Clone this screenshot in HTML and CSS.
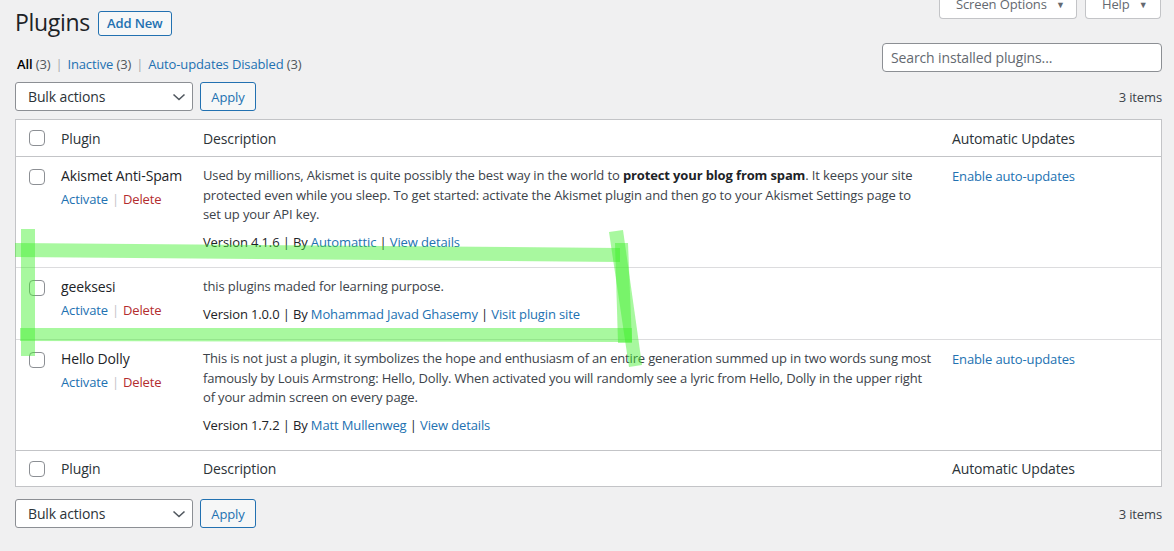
FILE: index.html
```html
<!DOCTYPE html>
<html lang="en">
<head>
<meta charset="utf-8">
<title>Plugins</title>
<link rel="stylesheet" href="styles.css">
</head>
<body>
<div class="wrap">
  <div class="head-row">
    <div class="title-group">
      <h1 class="page-title">Plugins</h1>
      <a class="btn-add" href="#">Add New</a>
    </div>
    <div class="meta-tabs">
      <button class="meta-tab tab-screen">Screen Options <span class="tri">&#9660;</span></button>
      <button class="meta-tab tab-help">Help <span class="tri">&#9660;</span></button>
    </div>
  </div>

  <div class="filter-row">
    <ul class="subsubsub">
      <li><a class="current" href="#">All <span class="count">(3)</span></a></li>
      <li class="sep">|</li>
      <li><a href="#">Inactive <span class="count">(3)</span></a></li>
      <li class="sep">|</li>
      <li><a href="#">Auto-updates Disabled <span class="count">(3)</span></a></li>
    </ul>
    <div class="search-box">Search installed plugins...</div>
  </div>

  <div class="tablenav">
    <div class="actions">
      <div class="select">Bulk actions
        <svg class="chev" width="14" height="8" viewBox="0 0 14 8"><path d="M1.5 1.5 L7 6.5 L12.5 1.5" fill="none" stroke="#50575e" stroke-width="1.6"/></svg>
      </div>
      <button class="btn-apply">Apply</button>
    </div>
    <div class="items">3 items</div>
  </div>

  <table class="plugins">
    <colgroup>
      <col class="c-check"><col class="c-name"><col class="c-desc"><col class="c-auto">
    </colgroup>
    <thead>
      <tr>
        <th class="check"><span class="cb"></span></th>
        <th>Plugin</th>
        <th>Description</th>
        <th>Automatic Updates</th>
      </tr>
    </thead>
    <tbody>
      <tr>
        <td class="check"><span class="cb"></span></td>
        <td class="name">
          <div class="plugin-title">Akismet Anti-Spam</div>
          <div class="row-actions"><a href="#">Activate</a><span class="bar">|</span><a class="del" href="#">Delete</a></div>
        </td>
        <td class="desc">
          <p>Used by millions, Akismet is quite possibly the best way in the world to <strong>protect your blog from spam</strong>. It keeps your site protected even while you sleep. To get started: activate the Akismet plugin and then go to your Akismet Settings page to set up your API key.</p>
          <div class="ver">Version 4.1.6 | By <a href="#">Automattic</a> | <a href="#">View details</a></div>
        </td>
        <td class="auto"><a href="#">Enable auto-updates</a></td>
      </tr>
      <tr>
        <td class="check"><span class="cb"></span></td>
        <td class="name">
          <div class="plugin-title">geeksesi</div>
          <div class="row-actions"><a href="#">Activate</a><span class="bar">|</span><a class="del" href="#">Delete</a></div>
        </td>
        <td class="desc">
          <p>this plugins maded for learning purpose.</p>
          <div class="ver">Version 1.0.0 | By <a href="#">Mohammad Javad Ghasemy</a> | <a href="#">Visit plugin site</a></div>
        </td>
        <td class="auto"></td>
      </tr>
      <tr>
        <td class="check"><span class="cb"></span></td>
        <td class="name">
          <div class="plugin-title">Hello Dolly</div>
          <div class="row-actions"><a href="#">Activate</a><span class="bar">|</span><a class="del" href="#">Delete</a></div>
        </td>
        <td class="desc">
          <p class="tight">This is not just a plugin, it symbolizes the hope and enthusiasm of an entire generation summed up in two words sung most famously by Louis Armstrong: Hello, Dolly. When activated you will randomly see a lyric from Hello, Dolly in the upper right of your admin screen on every page.</p>
          <div class="ver">Version 1.7.2 | By <a href="#">Matt Mullenweg</a> | <a href="#">View details</a></div>
        </td>
        <td class="auto"><a href="#">Enable auto-updates</a></td>
      </tr>
    </tbody>
    <tfoot>
      <tr>
        <th class="check"><span class="cb"></span></th>
        <th>Plugin</th>
        <th>Description</th>
        <th>Automatic Updates</th>
      </tr>
    </tfoot>
  </table>

  <div class="tablenav bottom">
    <div class="actions">
      <div class="select">Bulk actions
        <svg class="chev" width="14" height="8" viewBox="0 0 14 8"><path d="M1.5 1.5 L7 6.5 L12.5 1.5" fill="none" stroke="#50575e" stroke-width="1.6"/></svg>
      </div>
      <button class="btn-apply">Apply</button>
    </div>
    <div class="items">3 items</div>
  </div>
</div>

<svg class="marker" width="1174" height="551" viewBox="0 0 1174 551">
  <g fill="#3df02a" fill-opacity="0.45">
    <polygon points="15,243 620,248 620,262 15,257"/>
    <polygon points="21,229 35,229 35,356 21,356"/>
    <polygon points="20,328 632,328 632,342 20,341"/>
    <polygon points="609,232 623,230 642,365 629,367"/>
    <polygon points="615,243 628,243 632,343 618,343"/>
  </g>
</svg>
</body>
</html>
```

FILE: styles.css
```css
html, body {
  margin: 0;
  padding: 0;
}
body {
  background: #f0f0f1;
  color: #3c434a;
  font-family: "Open Sans", "Noto Sans", sans-serif;
  font-size: 13px;
  letter-spacing: -0.13px;
  overflow: hidden;
  position: relative;
  height: 551px;
}
a {
  color: #2271b1;
  text-decoration: none;
}
button {
  font-family: inherit;
  letter-spacing: inherit;
}
.wrap {
  padding: 0 12px 0 15px;
}

/* header */
.head-row {
  display: flex;
  justify-content: space-between;
  align-items: flex-start;
  height: 36px;
}
.title-group {
  display: flex;
  align-items: flex-start;
}
.page-title {
  margin: 0;
  padding-top: 7px;
  font-size: 23px;
  font-weight: 400;
  line-height: 30px;
  letter-spacing: -0.3px;
  color: #1d2327;
}
.btn-add {
  margin: 11px 0 0 8px;
  height: 23px;
  line-height: 23px;
  padding: 0 8px;
  border: 1px solid #2271b1;
  border-radius: 3px;
  background: #f6f7f7;
  font-size: 13px;
  font-weight: 600;
  color: #2271b1;
}
.meta-tabs {
  display: flex;
  gap: 8px;
  margin-top: -11px;
  margin-right: 1px;
}
.meta-tab {
  box-sizing: border-box;
  height: 30px;
  padding: 0 0 0 16px;
  background: #fff;
  border: 1px solid #c3c4c7;
  border-top: none;
  border-radius: 0 0 4px 4px;
  color: #646970;
  font-size: 13px;
  line-height: 30px;
  white-space: nowrap;
  text-align: left;
}
.tab-screen { width: 138px; }
.tab-help { width: 76px; }
.tri {
  font-size: 9px;
  margin-left: 6px;
  position: relative;
  top: -1px;
}

/* filter row */
.filter-row {
  display: flex;
  justify-content: space-between;
  margin-top: 7px;
  height: 29px;
}
.subsubsub {
  list-style: none;
  margin: 0 0 -2px 2px;
  padding: 0;
  display: flex;
  align-self: flex-end;
  line-height: 20px;
  font-size: 13px;
  color: #646970;
}
.subsubsub .sep {
  color: #a7aaad;
  margin: 0 5px;
}
.subsubsub .current {
  color: #000;
  font-weight: 600;
}
.count {
  color: #50575e;
  font-weight: 400;
}
.search-box {
  box-sizing: border-box;
  width: 280px;
  height: 29px;
  border: 1px solid #8c8f94;
  border-radius: 4px;
  background: #fff;
  padding: 0 8px;
  line-height: 27px;
  font-size: 14px;
  color: #646970;
}

/* tablenav */
.tablenav {
  display: flex;
  justify-content: space-between;
  align-items: center;
  margin-top: 10px;
  height: 29px;
}
.tablenav.bottom {
  margin-top: 12px;
}
.actions {
  display: flex;
  gap: 7px;
}
.select {
  box-sizing: border-box;
  width: 178px;
  height: 29px;
  border: 1px solid #8c8f94;
  border-radius: 3px;
  background: #fff;
  padding: 0 12px;
  line-height: 27px;
  font-size: 14px;
  color: #2c3338;
  display: flex;
  justify-content: space-between;
  align-items: center;
}
.chev { margin-right: -6px; }
.btn-apply {
  box-sizing: border-box;
  width: 56px;
  height: 29px;
  border: 1px solid #2271b1;
  border-radius: 3px;
  background: #f6f7f7;
  color: #2271b1;
  font-size: 13px;
  padding: 0;
}
.items {
  font-size: 13px;
  color: #3c434a;
}

/* table */
.plugins {
  margin-top: 8px;
  width: 1147px;
  table-layout: fixed;
  border-collapse: separate;
  border-spacing: 0;
  border: 1px solid #c3c4c7;
  background: #fff;
}
.c-check { width: 35px; }
.c-name { width: 142px; }
.c-auto { width: 219px; }
th {
  text-align: left;
  font-weight: 400;
  font-size: 14px;
  color: #2c3338;
  height: 36px;
  padding: 0 10px;
  vertical-align: middle;
}
thead th { border-bottom: 1px solid #c3c4c7; }
tfoot th { border-top: 1px solid #c3c4c7; height: 35px; }
th.check, td.check {
  padding: 0 0 0 13px;
}
.cb {
  display: block;
  box-sizing: border-box;
  width: 16px;
  height: 16px;
  border: 1px solid #8c8f94;
  border-radius: 4px;
  background: #fff;
}
td {
  vertical-align: top;
  padding: 9px 10px 14.5px;
  border-bottom: 1px solid #dcdcde;
}
tbody tr:last-child td { border-bottom: none; }
td.check { padding-top: 12px; }
.plugin-title {
  font-size: 14px;
  line-height: 20px;
  color: #1d2327;
}
.row-actions {
  margin-top: 3px;
  line-height: 20px;
  font-size: 13px;
}
.row-actions .bar {
  color: #c3c4c7;
  margin: 0 4px;
}
.row-actions .del { color: #b32d2e; }
.desc p {
  margin: 0;
  line-height: 19.5px;
}
.desc p.tight {
  letter-spacing: -0.165px;
}
.desc strong { font-weight: 700; color: #1d2327; }
.ver {
  margin-top: 8.5px;
  line-height: 19.5px;
  color: #1d2327;
}
.auto {
  line-height: 20px;
}

/* hand-drawn marker overlay */
.marker {
  position: absolute;
  left: 0;
  top: 0;
  pointer-events: none;
}
```
